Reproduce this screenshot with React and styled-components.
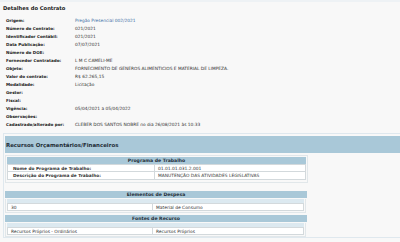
import React from "react";
import styled, { createGlobalStyle } from "styled-components";

const Global = createGlobalStyle`
  html, body { margin: 0; padding: 0; background: #f8f8f8; }
  body { font-family: "DejaVu Sans", Verdana, sans-serif; color: #222; }
`;

const Page = styled.div`
  width: 400px;
  height: 242px;
  overflow: hidden;
  border-top: 2px solid #eef2f5;
  box-sizing: border-box;
`;

const Title = styled.h1`
  margin: 0;
  padding: 2px 0 0 3px;
  font-size: 5.2px;
  font-weight: bold;
  height: 15px;
  line-height: 8px;
  box-sizing: border-box;
  color: #222;
`;

const Details = styled.div`
  display: grid;
  grid-template-columns: 69px 1fr;
  padding-left: 6px;
`;

const Label = styled.div`
  font-weight: bold;
  font-size: 4.1px;
  height: 8.02px;
  line-height: 8.02px;
  white-space: nowrap;
  color: #222;
`;

const Value = styled.div`
  font-size: 4.35px;
  height: 8.02px;
  line-height: 8.02px;
  white-space: nowrap;
  color: ${(p) => (p.$link ? "#3b6ea5" : "#333")};
`;

const Section = styled.div`
  margin: 4px 0 0 3px;
  border: 1px solid #dfe8ee;
  border-right: none;
  padding: 2px 0 0 1px;
  background: #f8f8f8;
`;

const SectionHeader = styled.div`
  background: #a9c8d8;
  height: 17px;
  line-height: 18px;
  font-size: 5.45px;
  font-weight: bold;
  padding-left: 1px;
  color: #1f2d36;
`;

const TableBox = styled.div`
  width: 303px;
  margin-top: 2px;
  border: 1px solid #e1e7ea;
  padding: 1px 1px 2px;
  box-sizing: border-box;
`;

const Group = styled.div`
  width: 302px;
  margin-top: ${(p) => p.$mt}px;
`;

const Band = styled.div`
  background: #a9c8d8;
  height: 7px;
  line-height: 7px;
  font-size: 4.6px;
  font-weight: bold;
  text-align: center;
  color: #1f2d36;
`;

const Frame = styled.div`
  border: 1px solid #e1e7ea;
  border-top: none;
  padding: 0 1px 1px;
  margin-right: 1px;
`;

const Spacer = styled.div`
  background: #dce9f0;
  height: 4px;
  margin-top: 1px;
`;

const Row = styled.div`
  display: grid;
  grid-template-columns: ${(p) => p.$split}px 1fr;
  background: #fff;
  border: 1px solid #d3d9dc;
  border-top: ${(p) => (p.$first ? "1px solid #d3d9dc" : "none")};
  height: 8px;
  line-height: 8px;
  box-sizing: border-box;
  color: #333;
`;

const Cell = styled.div`
  padding-left: ${(p) => p.$pad || 3}px;
  font-weight: ${(p) => (p.$bold ? "bold" : "normal")};
  font-size: ${(p) => (p.$bold ? 4.3 : 4.4)}px;
  border-right: ${(p) => (p.$divider ? "1px solid #d3d9dc" : "none")};
  white-space: nowrap;
  overflow: hidden;
  line-height: 7px;
`;

const rows = [
  ["Origem:", "Pregão Presencial 002/2021", true],
  ["Número do Contrato:", "021/2021"],
  ["Identificador Contábil:", "021/2021"],
  ["Data Publicação:", "07/07/2021"],
  ["Número do DOE:", ""],
  ["Fornecedor Contratado:", "L M C CAMELI-ME"],
  ["Objeto:", "FORNECIMENTO DE GENEROS ALIMENTICIOS E MATERIAL DE LIMPEZA."],
  ["Valor do contrato:", "R$ 62.265,15"],
  ["Modalidade:", "Licitação"],
  ["Gestor:", ""],
  ["Fiscal:", ""],
  ["Vigência:", "05/04/2021 a 05/04/2022"],
  ["Observações:", ""],
  ["Cadastrado/alterado por:", "CLEBER DOS SANTOS NOBRE no dia 26/08/2021 às 10:33"],
];

export default function App() {
  return (
    <Page>
      <Global />
      <Title>Detalhes do Contrato</Title>
      <Details>
        {rows.map(([l, v, link]) => (
          <React.Fragment key={l}>
            <Label>{l}</Label>
            <Value $link={link}>{v}</Value>
          </React.Fragment>
        ))}
      </Details>
      <Section>
        <SectionHeader>Recursos Orçamentários/Financeiros</SectionHeader>
        <TableBox>
          <Band>Programa de Trabalho</Band>
          <Row $first $split={147}>
            <Cell $bold $divider $pad={5}>Nome do Programa de Trabalho:</Cell>
            <Cell>01.01.01.031.2.001</Cell>
          </Row>
          <Row $split={147}>
            <Cell $bold $divider $pad={5}>Descrição do Programa de Trabalho:</Cell>
            <Cell>MANUTENÇÃO DAS ATIVIDADES LEGISLATIVAS</Cell>
          </Row>
        </TableBox>
        <Group $mt={8}>
          <Band>Elementos de Despesa</Band>
          <Frame>
            <Spacer />
            <Row $first $split={145}>
              <Cell $divider $pad={3}>30</Cell>
              <Cell>Material de Consumo</Cell>
            </Row>
          </Frame>
        </Group>
        <Group $mt={2}>
          <Band>Fontes de Recurso</Band>
          <Frame>
            <Spacer />
            <Row $first $split={145}>
              <Cell $divider $pad={3}>Recursos Próprios - Ordinários</Cell>
              <Cell>Recursos Próprios</Cell>
            </Row>
          </Frame>
        </Group>
      </Section>
    </Page>
  );
}
